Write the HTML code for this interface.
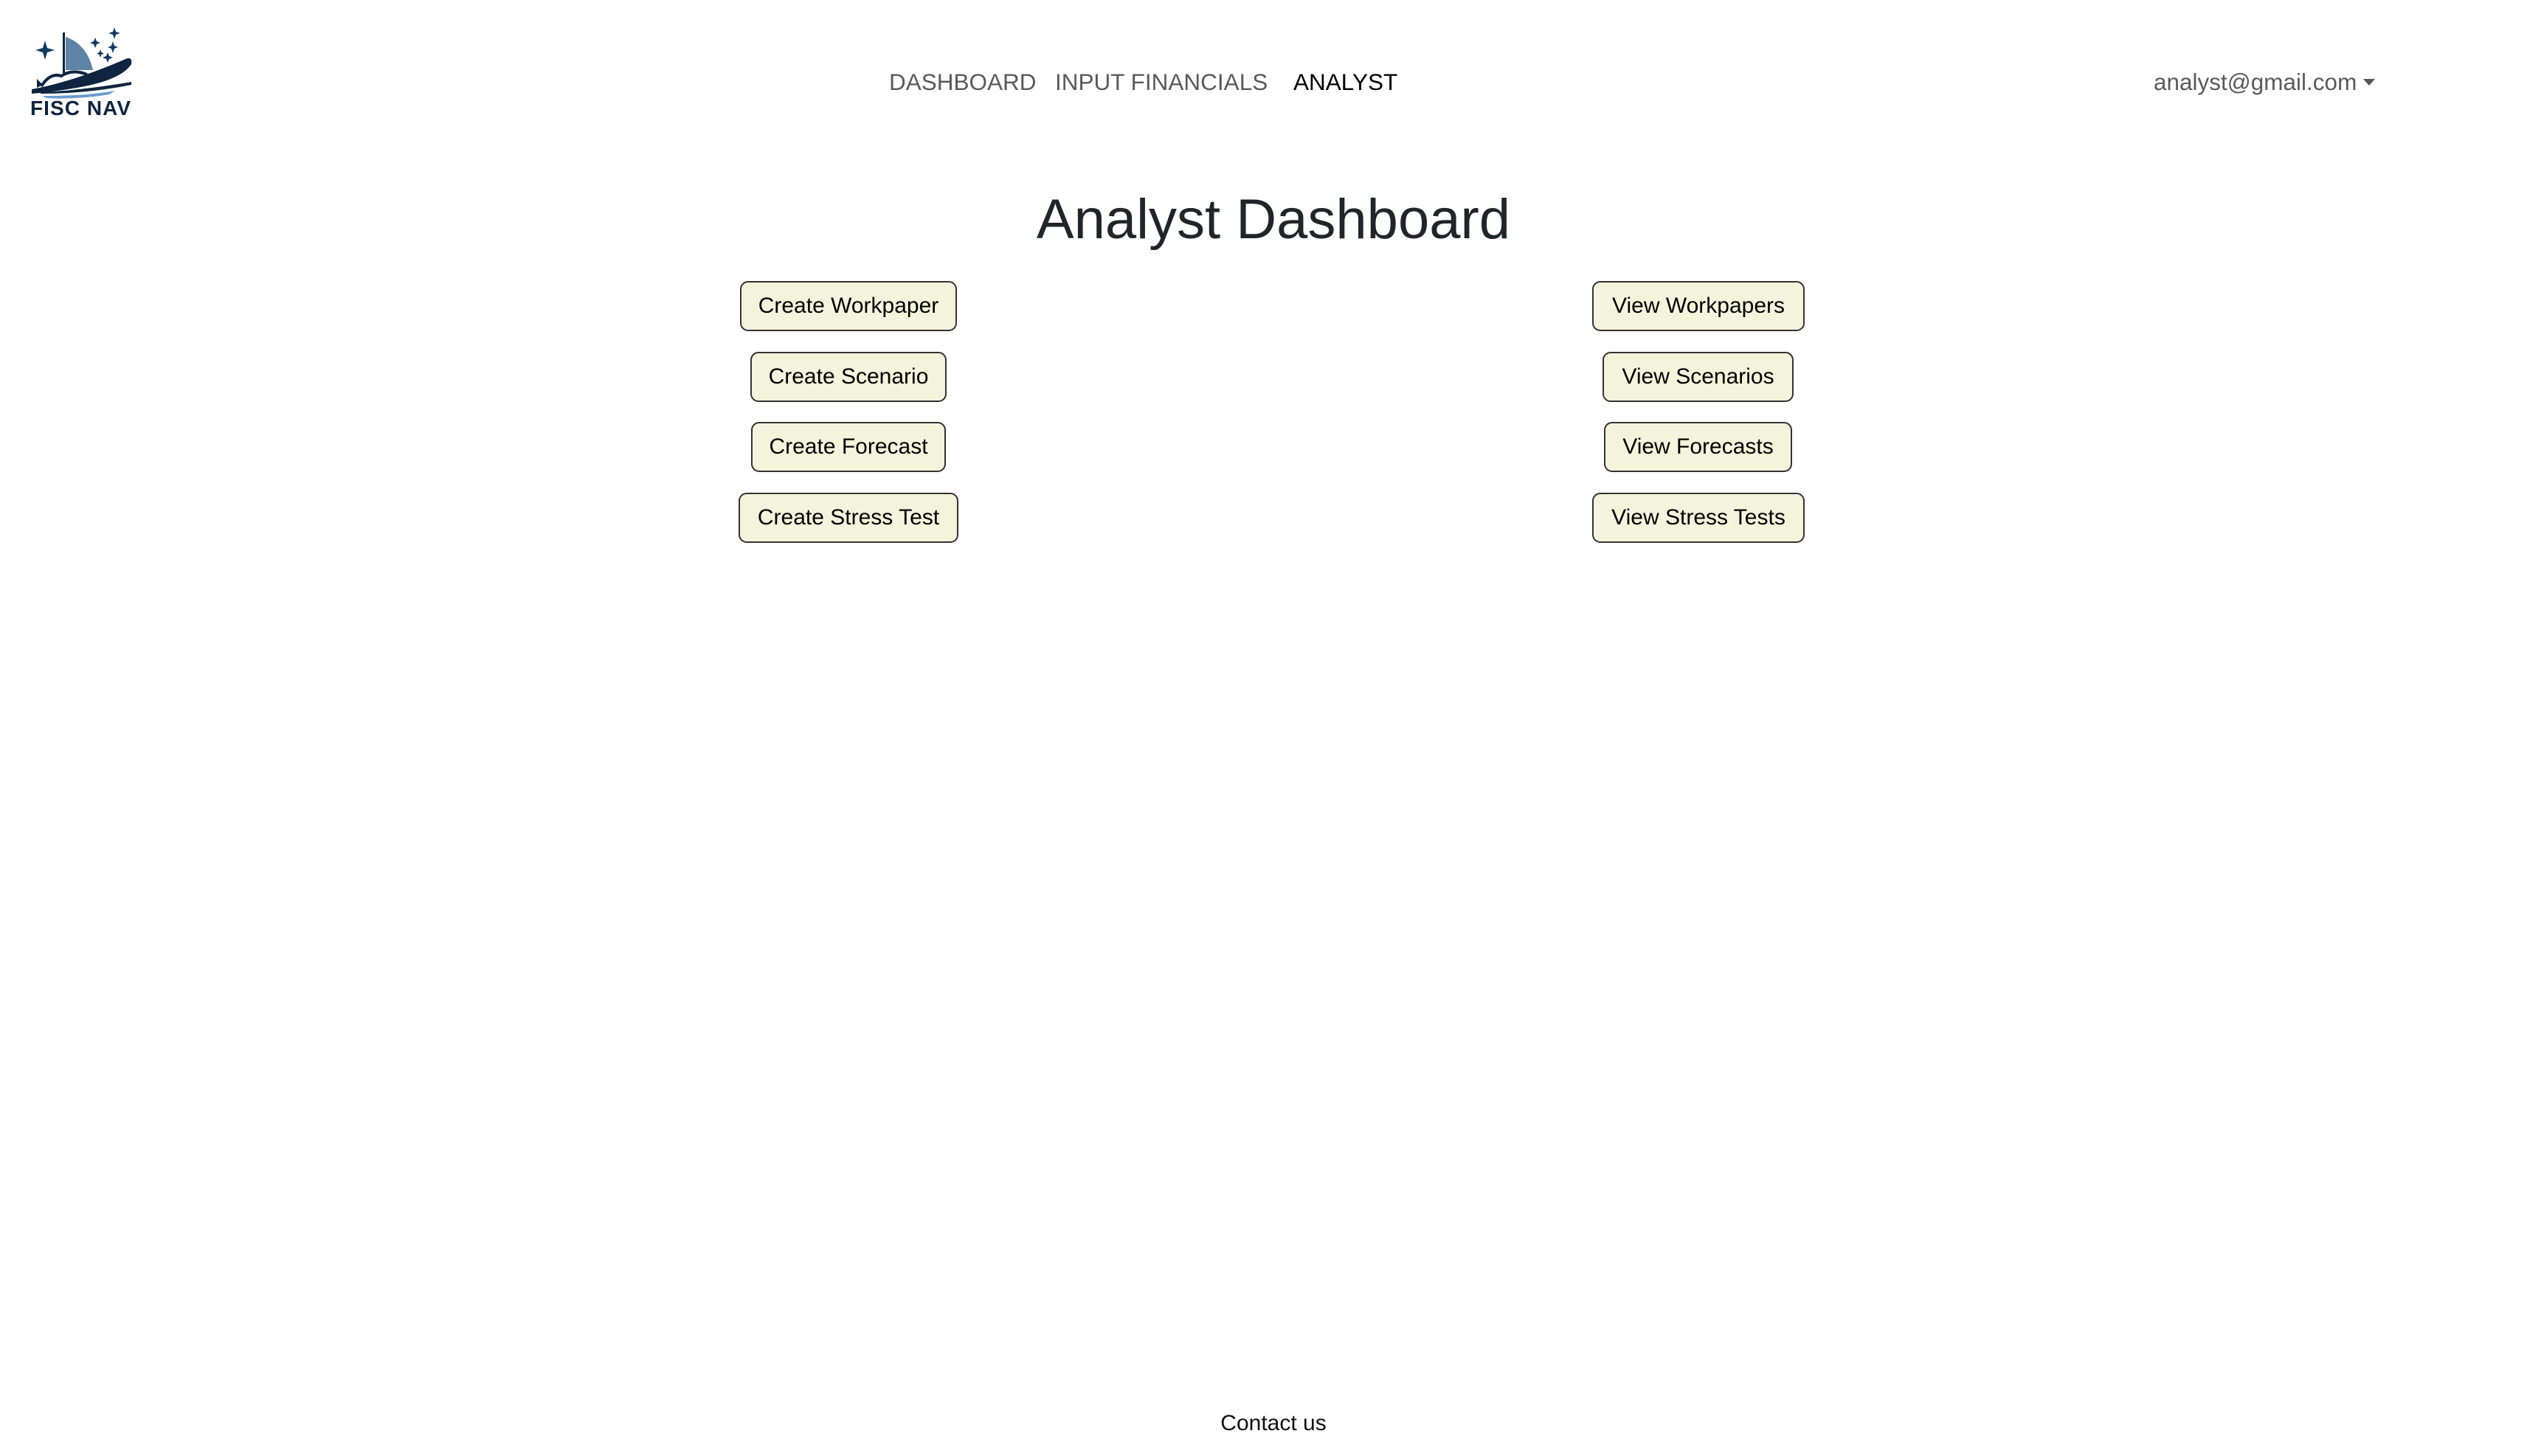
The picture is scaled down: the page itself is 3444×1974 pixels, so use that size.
<!DOCTYPE html>
<html><head><meta charset="utf-8"><style>
html,body{margin:0;padding:0;background:#fff;width:3444px;height:1974px;overflow:hidden;font-family:"Liberation Sans",sans-serif;position:relative}
.nav{position:absolute;top:90px;font-size:31.5px;color:rgba(0,0,0,.65);white-space:nowrap;line-height:42px}
.title{position:absolute;left:0;width:3452px;text-align:center;top:248px;font-size:76px;font-weight:500;color:#212529;line-height:100px}
.btn{position:absolute;height:64px;border:2px solid #333;border-radius:11px;background:#f4f3dc;font-size:30px;color:#000;display:flex;align-items:center;justify-content:center;box-sizing:content-box;white-space:nowrap}
.contact{position:absolute;top:1910px;left:0;width:3452px;text-align:center;font-size:30px;color:#111;line-height:40px}
</style></head><body>
<svg style="position:absolute;left:38px;top:35px" width="150" height="126" viewBox="0 0 150 126">
<g fill="#123a63">
<path d="M23 20 L26 30 L36 33 L26 36 L23 46 L20 36 L10 33 L20 30Z"/>
<path d="M117 2 L119 8 L125 10 L119 12 L117 18 L115 12 L109 10 L115 8Z"/>
<path d="M91 16 L93 21 L98 23 L93 25 L91 30 L89 25 L84 23 L89 21Z"/>
<path d="M115 21 L117 27 L122 29 L117 31 L115 37 L113 31 L108 29 L113 27Z"/>
<path d="M98 32 L99.5 36 L103 37.5 L99.5 39 L98 43 L96.5 39 L93 37.5 L96.5 36Z"/>
<path d="M108 36 L110 41 L115 43 L110 45 L108 50 L106 45 L101 43 L106 41Z"/>
</g>
<rect x="47" y="9" width="3" height="55" fill="#0f2440"/>
<path d="M51 15 Q80 25 88 60 L51 60Z" fill="#2a5a8a" opacity=".75"/>
<path d="M5 86 Q60 76 130 46 Q142 40 140 52 Q125 75 60 85 Q30 90 5 92Z" fill="#0f2440"/>
<path d="M12 72 L20 80 L12 84Z" fill="#0f2440"/>
<path d="M18 82 Q30 63 45 68 Q60 58 80 66" stroke="#0f2440" stroke-width="4" fill="none"/>
<path d="M15 90 Q70 88 140 76 L140 80 Q80 92 18 92Z" fill="#0f2440"/>
<path d="M20 95 Q80 95 118 88 L110 93 Q70 100 25 98Z" fill="#6a9cd0"/>
<text x="3" y="121" font-family="Liberation Sans" font-weight="bold" font-size="28" fill="#0f2440" textLength="136">FISC NAV</text>
</svg>
<div class="nav" style="left:1205px">DASHBOARD</div>
<div class="nav" style="left:1430px">INPUT FINANCIALS</div>
<div class="nav" style="left:1753px;color:#000">ANALYST</div>
<div class="nav" style="left:2919px">analyst@gmail.com<span style="display:inline-block;width:0;height:0;border-left:8px solid transparent;border-right:8px solid transparent;border-top:9px solid #555;margin-left:9px;vertical-align:6px"></span></div>
<div class="title">Analyst Dashboard</div>
<div class="btn" style="left:1003px;top:381px;width:290px">Create Workpaper</div>
<div class="btn" style="left:1017px;top:477px;width:262px">Create Scenario</div>
<div class="btn" style="left:1018px;top:572px;width:260px">Create Forecast</div>
<div class="btn" style="left:1001px;top:668px;width:294px">Create Stress Test</div>
<div class="btn" style="left:2158px;top:381px;width:284px">View Workpapers</div>
<div class="btn" style="left:2172px;top:477px;width:255px">View Scenarios</div>
<div class="btn" style="left:2174px;top:572px;width:251px">View Forecasts</div>
<div class="btn" style="left:2158px;top:668px;width:284px">View Stress Tests</div>
<div class="contact">Contact us</div>
</body></html>
